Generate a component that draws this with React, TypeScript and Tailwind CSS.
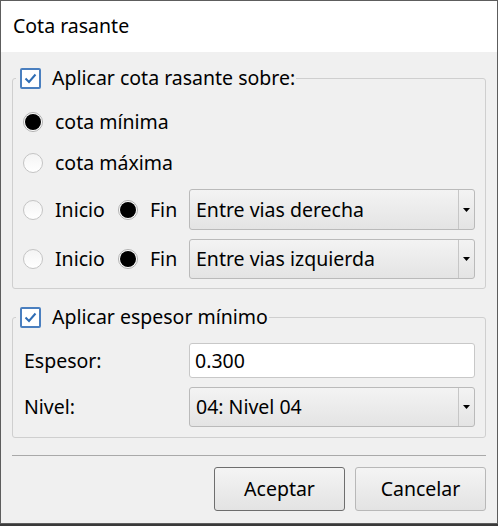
import React from "react";

function CheckBox() {
  return (
    <span className="flex h-[21px] w-[21px] shrink-0 items-center justify-center rounded-[2px] border-2 border-[#4a7fbf] bg-white">
      <svg width="15" height="15" viewBox="0 0 15 15">
        <path d="M2.5 7.5 L6 11 L12.5 3.5" fill="none" stroke="#2f6db5" strokeWidth="2" />
      </svg>
    </span>
  );
}

function Radio({ checked }: { checked?: boolean }) {
  return checked ? (
    <span className="flex h-[20px] w-[20px] shrink-0 items-center justify-center rounded-full border border-[#b0b0b0] bg-white">
      <span className="h-[16px] w-[16px] rounded-full bg-black" />
    </span>
  ) : (
    <span className="h-[20px] w-[20px] shrink-0 rounded-full border border-[#c4c4c4] bg-gradient-to-b from-[#f4f4f4] to-white" />
  );
}

function Combo({ text, h }: { text: string; h: string }) {
  return (
    <div
      className={`flex flex-1 items-stretch rounded-[3px] border border-[#bababa] bg-gradient-to-b from-[#f3f3f3] to-[#e4e4e4] ${h}`}
    >
      <div className="flex flex-1 items-center pl-[6px]">{text}</div>
      <div className="flex w-[16px] items-center justify-center border-l border-[#c6c6c6]">
        <svg width="7" height="4" viewBox="0 0 7 4">
          <path d="M0 0 H7 L3.5 4 Z" fill="#000" />
        </svg>
      </div>
    </div>
  );
}

export default function App() {
  return (
    <div className="h-[526px] w-[498px] bg-[#3a3a3a] font-['Noto_Sans',sans-serif] text-[19.5px] leading-[22px] text-black">
      <div className="flex h-[524px] w-[498px] flex-col border border-[#5d5d5d] bg-[#f0f0f0]">
        <div className="flex h-[51px] items-center bg-white pl-[12px] pb-[2px]">Cota rasante</div>
        <div className="flex flex-1 flex-col px-[11px] pt-[15px]">
          <fieldset className="rounded-[3px] border border-[#cfcfcf] pb-[9px] pl-[10px] pr-[10px]">
            <legend className="-ml-[7px] pl-[4px] pr-[1px]">
              <span className="flex items-center gap-[11px]">
                <CheckBox />
                <span>Aplicar cota rasante sobre:</span>
              </span>
            </legend>
            <div className="mt-[13px] flex h-[40px] items-center gap-[12px]">
              <Radio checked />
              <span>cota mínima</span>
            </div>
            <div className="mt-[1px] flex h-[40px] items-center gap-[12px]">
              <Radio />
              <span>cota máxima</span>
            </div>
            <div className="mt-[6px] flex h-[41px] items-center">
              <Radio />
              <span className="ml-[12px] w-[50px]">Inicio</span>
              <span className="ml-[13px]">
                <Radio checked />
              </span>
              <span className="ml-[12px] w-[39px]">Fin</span>
              <Combo text="Entre vias derecha" h="h-[41px]" />
            </div>
            <div className="mt-[9px] flex h-[40px] items-center">
              <Radio />
              <span className="ml-[12px] w-[50px]">Inicio</span>
              <span className="ml-[13px]">
                <Radio checked />
              </span>
              <span className="ml-[12px] w-[39px]">Fin</span>
              <Combo text="Entre vias izquierda" h="h-[40px]" />
            </div>
          </fieldset>
          <fieldset className="mt-[17px] rounded-[3px] border border-[#cfcfcf] pb-[10px] pl-[11px] pr-[10px]">
            <legend className="-ml-[8px] pl-[4px] pr-[1px]">
              <span className="flex items-center gap-[11px]">
                <CheckBox />
                <span>Aplicar espesor mínimo</span>
              </span>
            </legend>
            <div className="mt-[15px] flex h-[35px] items-center">
              <span className="w-[165px]">Espesor:</span>
              <div className="flex h-[35px] flex-1 items-center rounded-[3px] border border-[#c8c8c8] bg-white pl-[5px]">
                0.300
              </div>
            </div>
            <div className="mt-[9px] flex h-[40px] items-center">
              <span className="w-[165px]">Nivel:</span>
              <Combo text="04: Nivel 04" h="h-[40px]" />
            </div>
          </fieldset>
          <div className="mt-[17px] h-px bg-[#a9a9a9]" />
          <div className="mt-[11px] flex justify-end gap-[10px]">
            <button className="h-[44px] w-[131px] rounded-[3px] border border-[#6e6e6e] bg-gradient-to-b from-[#f4f4f4] to-[#e3e3e3]">
              Aceptar
            </button>
            <button className="h-[44px] w-[131px] rounded-[3px] border border-[#b8b8b8] bg-gradient-to-b from-[#f4f4f4] to-[#e3e3e3]">
              Cancelar
            </button>
          </div>
        </div>
      </div>
    </div>
  );
}
